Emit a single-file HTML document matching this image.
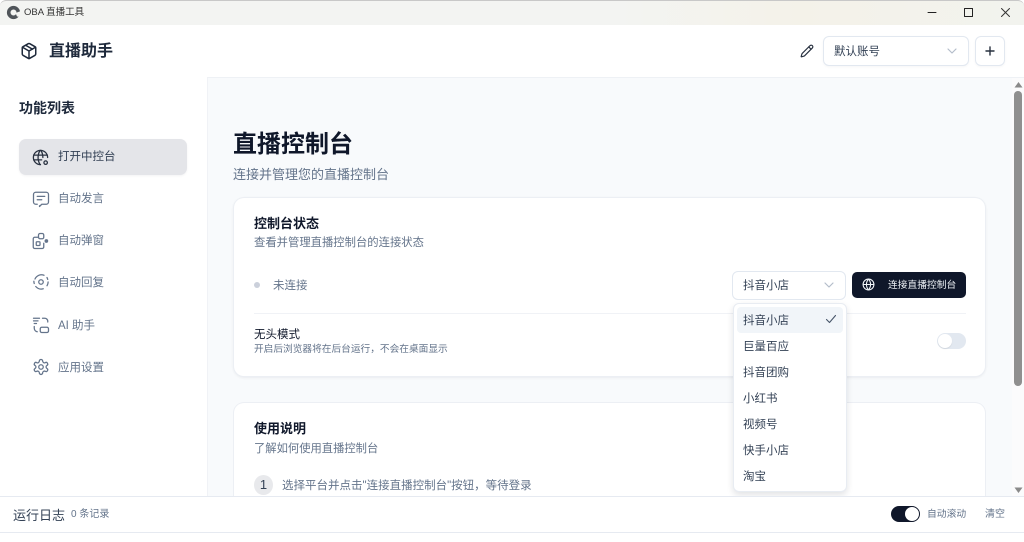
<!DOCTYPE html>
<html lang="zh">
<head>
<meta charset="utf-8">
<style>
html,body{margin:0;padding:0;width:1024px;height:542px;overflow:hidden;background:#fff;}
body{position:relative;font-family:"Liberation Sans","Noto Sans CJK SC",sans-serif;color:#0f172a;}
.a{position:absolute;white-space:nowrap;}
svg{position:absolute;display:block;fill:none;stroke-linecap:round;stroke-linejoin:round;}
.nav{left:58px;font-size:11.5px;line-height:16px;color:#64748b;}
.opt{left:743px;font-size:11.5px;line-height:16px;color:#334155;}
.ic{stroke:#64748b;stroke-width:1.7;}
</style>
</head>
<body>
<!-- title bar -->
<div class="a" style="left:0;top:0;width:1024px;height:25px;background:linear-gradient(90deg,#f3f4f2 0%,#f3f4f2 60%,#f4f2e9 78%,#f2f3ee 100%);border-top:1px solid #c8c8c8;box-sizing:border-box;border-radius:6px 6px 0 0;"></div>
<svg style="left:6px;top:5px" width="15" height="15" viewBox="0 0 15 15"><circle cx="7.5" cy="7.5" r="4.8" stroke="#50555a" stroke-width="3.6"/><path d="M9.5 8 L15 6 L15 12 L11 11.5 Z" fill="#f3f4f2" stroke="none"/></svg>
<div class="a" style="left:24px;top:5px;font-size:9.5px;line-height:15px;color:#333;">OBA 直播工具</div>
<svg style="left:927px;top:6px" width="50" height="13" viewBox="0 0 50 13"><path d="M1 6.5H9" stroke="#222" stroke-width="1"/><rect x="37.5" y="2.5" width="8" height="8" stroke="#222" stroke-width="1"/></svg>
<svg style="left:996px;top:6px" width="16" height="13" viewBox="0 0 16 13"><path d="M5.5 2.5L13.5 10.5M13.5 2.5L5.5 10.5" stroke="#333" stroke-width="1"/></svg>

<!-- header -->
<svg style="left:20px;top:42px" width="18" height="18" viewBox="0 0 24 24" stroke="#1e293b" stroke-width="2"><path d="M21 8a2 2 0 0 0-1-1.73l-7-4a2 2 0 0 0-2 0l-7 4A2 2 0 0 0 3 8v8a2 2 0 0 0 1 1.73l7 4a2 2 0 0 0 2 0l7-4A2 2 0 0 0 21 16Z"/><path d="m3.3 7 8.7 5 8.7-5M12 22V12"/><path d="m7.5 4.3 9 5.2"/></svg>
<div class="a" style="left:49px;top:41px;font-size:16px;line-height:22px;font-weight:700;color:#1e293b;">直播助手</div>
<svg style="left:800px;top:44px" width="14" height="14" viewBox="0 0 24 24" stroke="#27303f" stroke-width="2"><path d="M21.2 6.8a2.8 2.8 0 0 0-4-4L3.8 16.2a2 2 0 0 0-.5.8l-1.3 4.4a.5.5 0 0 0 .6.6l4.4-1.3a2 2 0 0 0 .8-.5Z"/><path d="m15 5 4 4"/></svg>
<div class="a" style="left:823px;top:36px;width:146px;height:30px;box-sizing:border-box;background:#fff;border:1px solid #e2e8f0;border-radius:6px;box-shadow:0 1px 2px rgba(15,23,42,.04);"></div>
<div class="a" style="left:834px;top:44px;font-size:11.5px;line-height:16px;color:#334155;">默认账号</div>
<svg style="left:946px;top:46px" width="12" height="10" viewBox="0 0 12 10" stroke="#b4bdca" stroke-width="1.2"><path d="M2 3L6 7L10 3"/></svg>
<div class="a" style="left:975px;top:36px;width:30px;height:30px;box-sizing:border-box;background:#fff;border:1px solid #e2e8f0;border-radius:6px;box-shadow:0 1px 2px rgba(15,23,42,.04);"></div>
<svg style="left:984px;top:45px" width="12" height="12" viewBox="0 0 12 12" stroke="#27303f" stroke-width="1.4"><path d="M6 2V10M2 6H10"/></svg>

<!-- main bg -->
<div class="a" style="left:207px;top:77px;width:817px;height:419px;background:#f8fafc;border-top:1px solid #eef1f5;border-left:1px solid #f0f2f6;box-sizing:border-box;"></div>

<!-- sidebar -->
<div class="a" style="left:19px;top:99px;font-size:14px;line-height:18px;font-weight:700;color:#1e293b;">功能列表</div>
<div class="a" style="left:19px;top:139px;width:168px;height:36px;background:#e4e5e9;border-radius:7px;box-shadow:0 1px 2px rgba(15,23,42,.05);"></div>

<svg style="left:31px;top:147.5px" width="19" height="19" viewBox="0 0 24 24" stroke="#27303f" stroke-width="1.6"><path d="M21 12a9 9 0 1 0-9 9"/><path d="M3.5 9h17M3.5 15h10"/><path d="M11.5 3a17 17 0 0 0 0 18"/><path d="M12.5 3a17 17 0 0 1 2.5 9"/><circle cx="18.5" cy="18.5" r="2.2"/></svg>
<div class="a nav" style="top:149px;color:#334155;">打开中控台</div>

<svg style="left:32px;top:189.5px" width="18" height="18" viewBox="0 0 24 24" class="ic"><path d="M7 19H5a3 3 0 0 1-3-3V6a3 3 0 0 1 3-3h14a3 3 0 0 1 3 3v10a3 3 0 0 1-3 3h-6l-3 3v-1"/><path d="M7 8.5h10M7 13h6"/></svg>
<div class="a nav" style="top:191px;">自动发言</div>

<svg style="left:31px;top:231.5px" width="18" height="18" viewBox="0 0 24 24" class="ic"><rect x="10" y="2" width="7" height="7" rx="2"/><path d="M10 7H5a2 2 0 0 0-2 2v11a2 2 0 0 0 2 2h10a2 2 0 0 0 2-2v-5"/><rect x="7" y="13" width="5" height="5" rx="1"/><circle cx="20.5" cy="12" r="1.6" fill="#64748b"/></svg>
<div class="a nav" style="top:233px;">自动弹窗</div>

<svg style="left:31.5px;top:273px" width="18" height="18" viewBox="0 0 24 24" class="ic"><path d="M4 8a9.5 9.5 0 0 1 12-5M20 6l1 2.5M21.5 12a9.5 9.5 0 0 1-1.5 5M15 21a9.5 9.5 0 0 1-10-3M3 14a9 9 0 0 1-.5-3"/><circle cx="12" cy="12" r="3"/></svg>
<div class="a nav" style="top:275px;">自动回复</div>

<svg style="left:31.5px;top:316px" width="18" height="18" viewBox="0 0 24 24" class="ic"><path d="M2 3h8M2 6.5h6M3 10h3"/><path d="M14 3h3a4 4 0 0 1 4 4v1M3 14v2a5 5 0 0 0 4 5"/><rect x="11" y="15" width="11" height="7" rx="2"/></svg>
<div class="a nav" style="top:318px;">AI 助手</div>

<svg style="left:31.5px;top:357.5px" width="18" height="18" viewBox="0 0 24 24" class="ic"><path d="M12.2 2h-.4a2 2 0 0 0-2 2v.2a2 2 0 0 1-1 1.7l-.4.3a2 2 0 0 1-2 0l-.2-.1a2 2 0 0 0-2.7.7l-.2.4a2 2 0 0 0 .7 2.7l.2.1a2 2 0 0 1 1 1.7v.5a2 2 0 0 1-1 1.7l-.2.1a2 2 0 0 0-.7 2.7l.2.4a2 2 0 0 0 2.7.7l.2-.1a2 2 0 0 1 2 0l.4.3a2 2 0 0 1 1 1.7v.2a2 2 0 0 0 2 2h.4a2 2 0 0 0 2-2v-.2a2 2 0 0 1 1-1.7l.4-.3a2 2 0 0 1 2 0l.2.1a2 2 0 0 0 2.7-.7l.2-.4a2 2 0 0 0-.7-2.7l-.2-.1a2 2 0 0 1-1-1.7v-.5a2 2 0 0 1 1-1.7l.2-.1a2 2 0 0 0 .7-2.7l-.2-.4a2 2 0 0 0-2.7-.7l-.2.1a2 2 0 0 1-2 0l-.4-.3a2 2 0 0 1-1-1.7V4a2 2 0 0 0-2-2Z"/><circle cx="12" cy="12" r="3"/></svg>
<div class="a nav" style="top:360px;">应用设置</div>

<!-- page heading -->
<div class="a" style="left:233px;top:128px;font-size:24px;line-height:34px;font-weight:700;color:#0f172a;">直播控制台</div>
<div class="a" style="left:233px;top:166px;font-size:13px;line-height:17px;color:#64748b;">连接并管理您的直播控制台</div>

<!-- card 1 -->
<div class="a" style="left:234px;top:198px;width:751px;height:178px;background:#fff;border-radius:10px;box-shadow:0 0 0 1px #eceff4,0 1px 3px rgba(15,23,42,.10);"></div>
<div class="a" style="left:254px;top:215px;font-size:13px;line-height:17px;font-weight:700;color:#0f172a;">控制台状态</div>
<div class="a" style="left:254px;top:236px;font-size:11.33px;line-height:15px;color:#64748b;">查看并管理直播控制台的连接状态</div>
<div class="a" style="left:254px;top:282px;width:6px;height:6px;border-radius:50%;background:#cbd0db;"></div>
<div class="a" style="left:273px;top:278px;font-size:11.5px;line-height:16px;color:#64748b;">未连接</div>

<div class="a" style="left:732px;top:271px;width:114px;height:29px;box-sizing:border-box;background:#fff;border:1px solid #e2e8f0;border-radius:6px;"></div>
<div class="a" style="left:743px;top:278px;font-size:11.5px;line-height:16px;color:#334155;">抖音小店</div>
<svg style="left:823px;top:280px" width="12" height="10" viewBox="0 0 12 10" stroke="#b4bdca" stroke-width="1.2"><path d="M2 3L6 7L10 3"/></svg>
<div class="a" style="left:852px;top:272px;width:114px;height:26px;background:#0f172a;border-radius:5px;"></div>
<svg style="left:862px;top:278px" width="13" height="13" viewBox="0 0 24 24" stroke="#f1f5f9" stroke-width="2"><circle cx="12" cy="12" r="10"/><path d="M2 12h20M12 2a15 15 0 0 1 0 20M12 2a15 15 0 0 0 0 20"/></svg>
<div class="a" style="left:888px;top:279px;font-size:9.75px;line-height:14px;color:#f1f5f9;">连接直播控制台</div>

<div class="a" style="left:254px;top:313px;width:712px;height:1px;background:#f0f2f6;"></div>
<div class="a" style="left:254px;top:328px;font-size:11.5px;line-height:15px;color:#0f172a;">无头模式</div>
<div class="a" style="left:254px;top:343px;font-size:9.7px;line-height:14px;color:#64748b;">开启后浏览器将在后台运行，不会在桌面显示</div>
<div class="a" style="left:937px;top:333px;width:29px;height:16px;background:#e2e8f0;border-radius:8px;"></div>
<div class="a" style="left:938px;top:334px;width:14px;height:14px;background:#fff;border-radius:50%;box-shadow:0 1px 1px rgba(0,0,0,.08);"></div>

<!-- card 2 -->
<div class="a" style="left:234px;top:403px;width:751px;height:93px;background:#fff;border-radius:10px 10px 0 0;box-shadow:0 0 0 1px #eceff4;"></div>
<div class="a" style="left:254px;top:420px;font-size:13px;line-height:17px;font-weight:700;color:#0f172a;">使用说明</div>
<div class="a" style="left:254px;top:441px;font-size:11.3px;line-height:16px;color:#64748b;">了解如何使用直播控制台</div>
<div class="a" style="left:254px;top:475px;width:19px;height:20px;border-radius:50%;background:#e8e9ec;text-align:center;font-size:13px;line-height:20px;color:#334155;">1</div>
<div class="a" style="left:282px;top:478px;font-size:11.5px;line-height:16px;color:#64748b;">选择平台并点击"连接直播控制台"按钮，等待登录</div>

<!-- dropdown -->
<div class="a" style="left:733px;top:303px;width:114px;height:189px;background:#fff;border:1px solid #e8ecf2;box-sizing:border-box;border-radius:6px;box-shadow:0 3px 7px rgba(15,23,42,.12);"></div>
<div class="a" style="left:737px;top:307px;width:106px;height:26px;background:#f1f5f9;border-radius:4px;"></div>
<div class="a opt" style="top:313px;">抖音小店</div>
<svg style="left:825px;top:313px" width="12" height="12" viewBox="0 0 12 12" stroke="#475569" stroke-width="1.1"><path d="M1.5 6.5L4.5 9.5L10.5 2.5"/></svg>
<div class="a opt" style="top:339px;">巨量百应</div>
<div class="a opt" style="top:365px;">抖音团购</div>
<div class="a opt" style="top:391px;">小红书</div>
<div class="a opt" style="top:417px;">视频号</div>
<div class="a opt" style="top:443px;">快手小店</div>
<div class="a opt" style="top:469px;">淘宝</div>

<!-- scrollbar -->
<div class="a" style="left:1012px;top:78px;width:12px;height:418px;background:#fbfbfc;"></div>
<svg style="left:1013px;top:81px" width="11" height="8" viewBox="0 0 11 8"><path d="M5.5 1L9.5 6.5H1.5Z" fill="#8a8a8a"/></svg>
<div class="a" style="left:1014px;top:91px;width:8px;height:295px;background:#8f8f8f;border-radius:4px;"></div>
<svg style="left:1013px;top:486px" width="11" height="8" viewBox="0 0 11 8"><path d="M5.5 7L9.5 1.5H1.5Z" fill="#8a8a8a"/></svg>

<!-- footer -->
<div class="a" style="left:0;top:496px;width:1024px;height:37px;background:#fff;border-top:1px solid #e6eaf1;border-bottom:1px solid #e6eaf1;box-sizing:border-box;"></div>
<div class="a" style="left:13px;top:507px;font-size:13px;line-height:17px;color:#334155;">运行日志</div>
<div class="a" style="left:71px;top:508px;font-size:10px;line-height:14px;color:#64748b;">0 条记录</div>
<div class="a" style="left:891px;top:506px;width:29px;height:16px;background:#0f172a;border-radius:8px;"></div>
<div class="a" style="left:905px;top:507px;width:14px;height:14px;background:#fff;border-radius:50%;"></div>
<div class="a" style="left:927px;top:508px;font-size:9.8px;line-height:14px;color:#64748b;">自动滚动</div>
<div class="a" style="left:985px;top:508px;font-size:10px;line-height:14px;color:#64748b;">清空</div>
</body>
</html>
